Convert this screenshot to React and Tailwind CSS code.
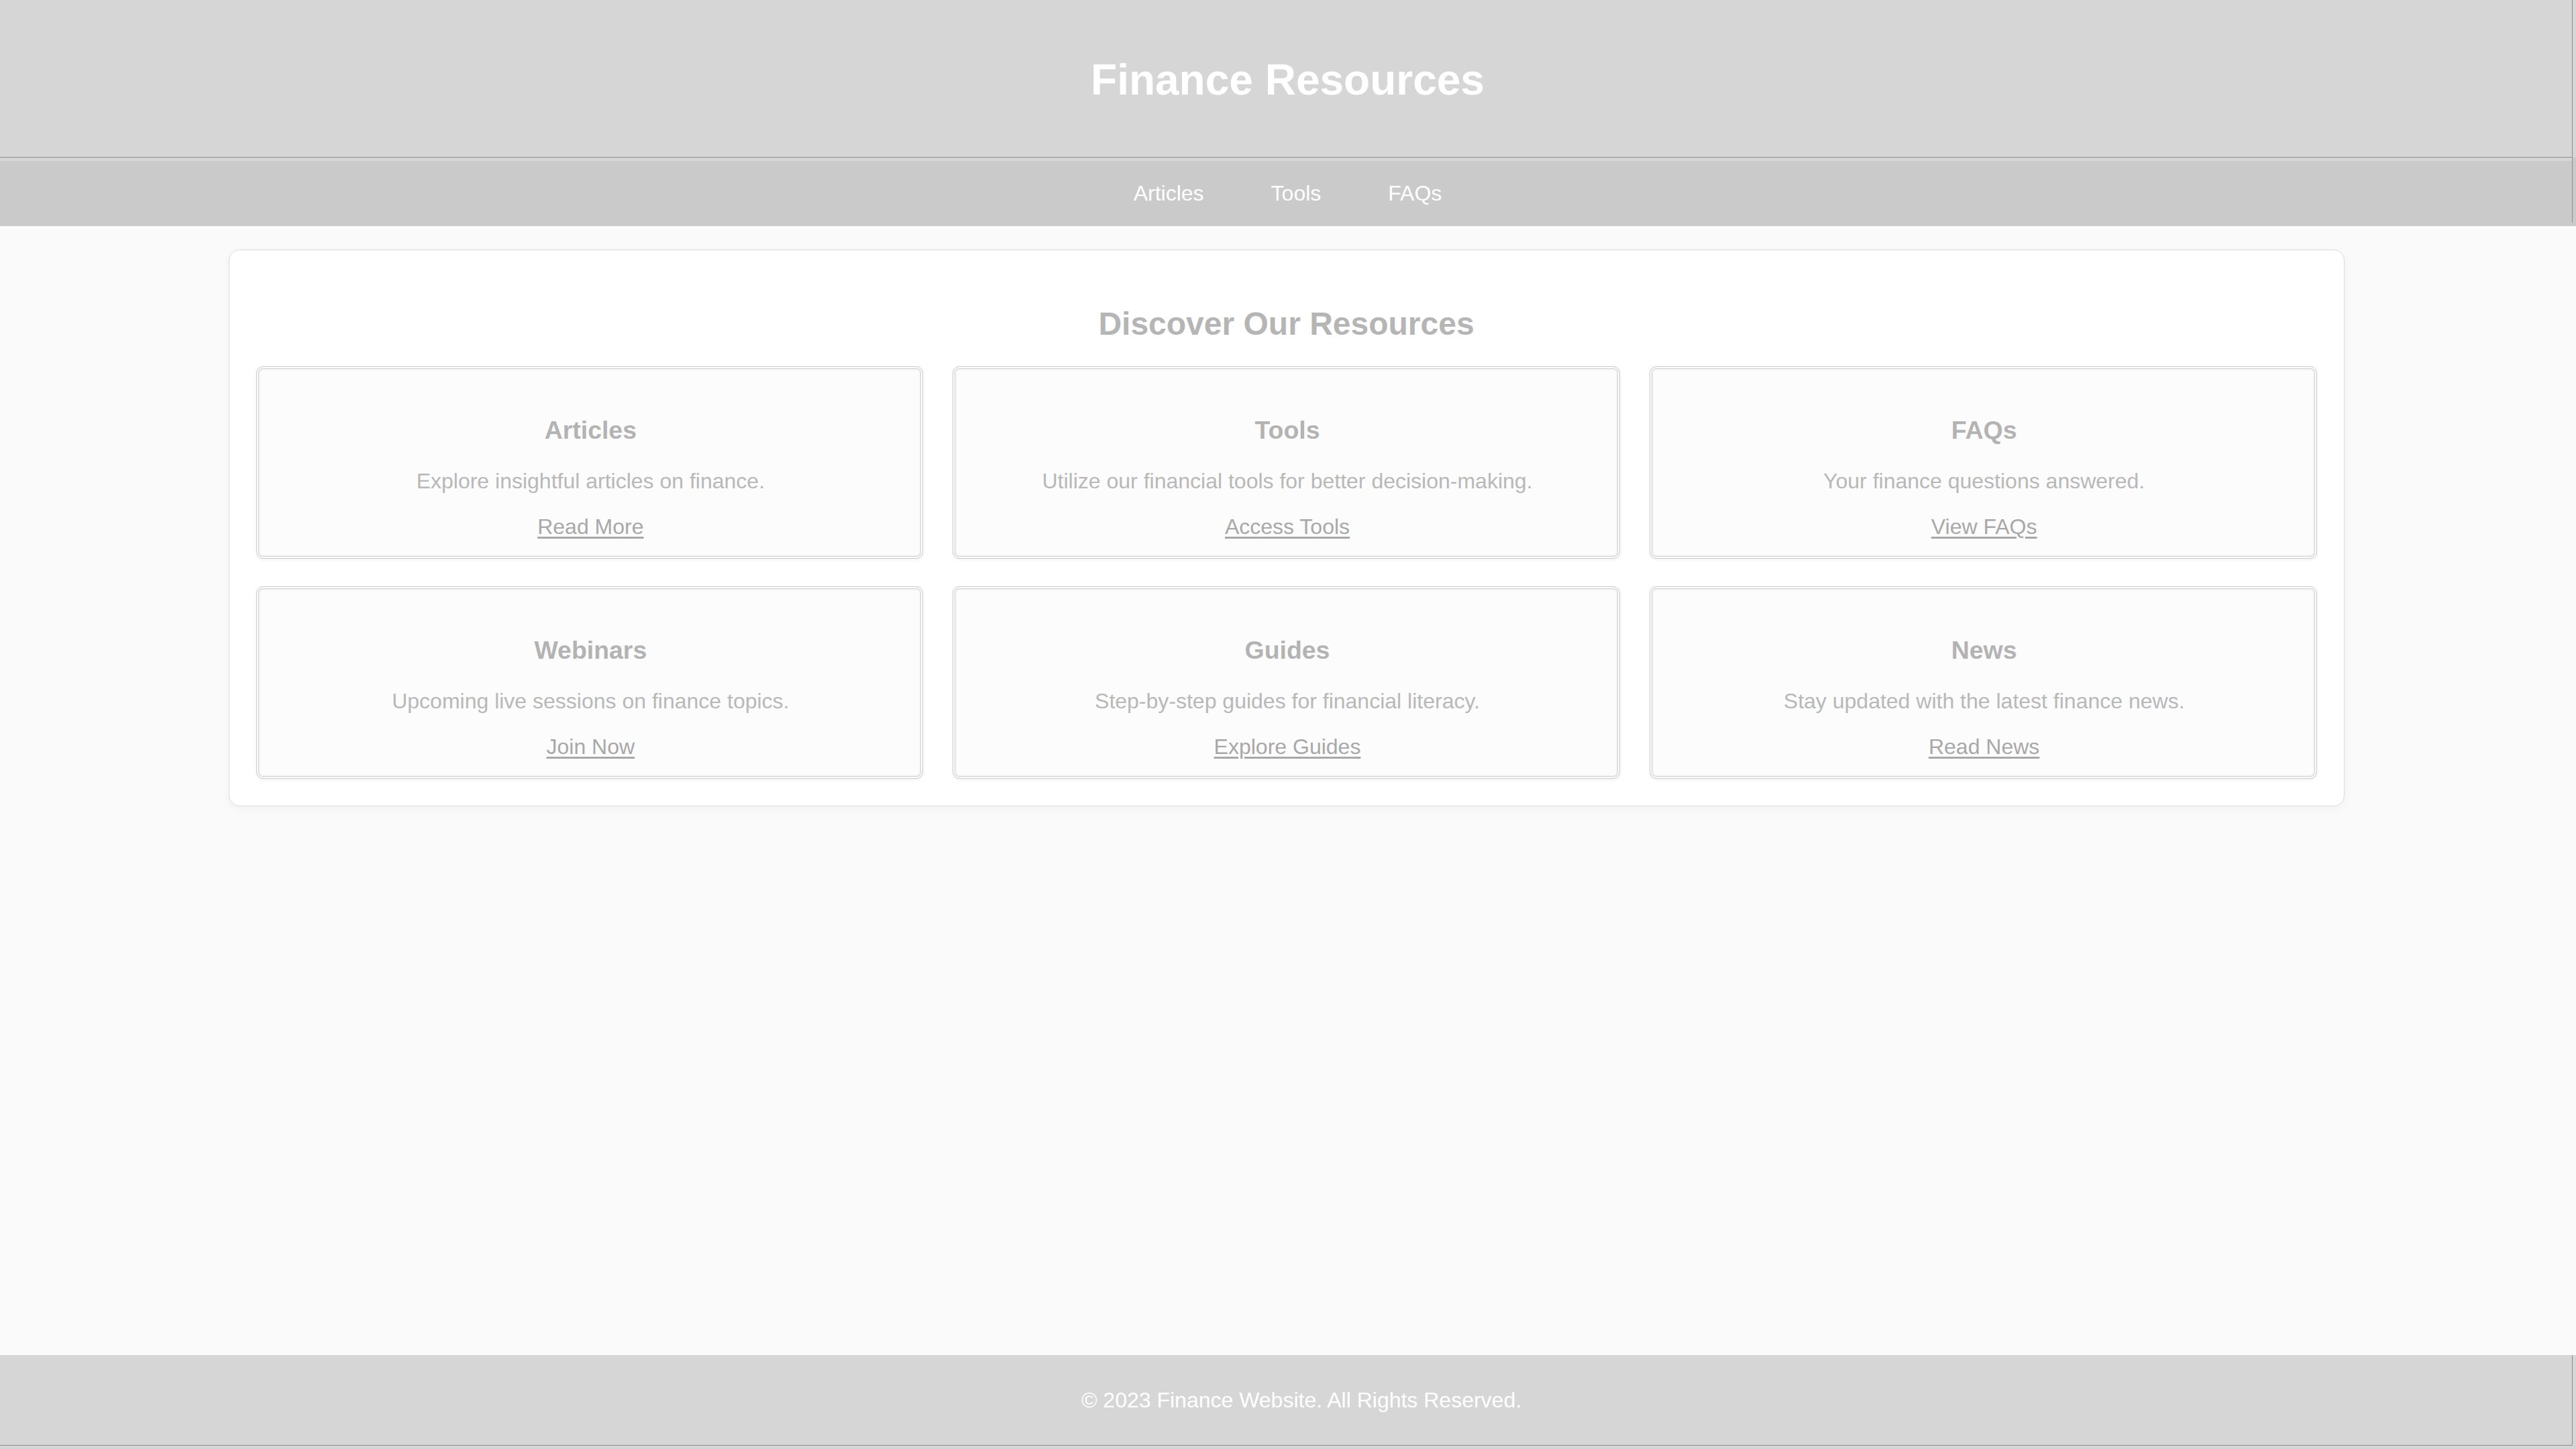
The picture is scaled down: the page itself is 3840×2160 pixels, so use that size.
import React from 'react';

const resources = [
  { title: 'Articles', text: 'Explore insightful articles on finance.', link: 'Read More' },
  { title: 'Tools', text: 'Utilize our financial tools for better decision-making.', link: 'Access Tools' },
  { title: 'FAQs', text: 'Your finance questions answered.', link: 'View FAQs' },
  { title: 'Webinars', text: 'Upcoming live sessions on finance topics.', link: 'Join Now' },
  { title: 'Guides', text: 'Step-by-step guides for financial literacy.', link: 'Explore Guides' },
  { title: 'News', text: 'Stay updated with the latest finance news.', link: 'Read News' },
];

function ResourceCard({ item }) {
  return (
    <div className="flex flex-col items-center h-[287px] pt-[73px] pl-[3px] bg-[#fcfcfc] border border-[#cccccc] rounded-[10px] shadow-[inset_0_0_0_2px_#fdfdfd,inset_0_0_0_3px_#d0d0d0,inset_0_0_0_5px_#f4f4f4,0_2px_5px_rgba(0,0,0,0.05)]">
      <h3 className="text-[37.44px] leading-[43px] font-bold text-[#b3b3b3]">{item.title}</h3>
      <p className="mt-[36px] text-[32px] leading-[37px] text-[#b8b8b8]">{item.text}</p>
      <a href="#" className="mt-[31px] text-[32px] leading-[37px] text-[#a8a8a8] underline underline-offset-[4px]">
        {item.link}
      </a>
    </div>
  );
}

export default function App() {
  return (
    <div className="min-h-[2160px] flex flex-col bg-[#fafafa] font-['Liberation_Sans',Arial,sans-serif]">
      {/* header */}
      <header className="bg-[#d6d6d6]">
        <div className="w-[3835px] h-[235px] pt-[4px] pl-[5px] flex items-center justify-center border-r border-b border-[#8c8c8c]">
          <h1 className="text-[64px] leading-[74px] font-bold text-white">Finance Resources</h1>
        </div>
      </header>

      {/* nav */}
      <nav className="bg-[#cacaca]">
        <div className="w-[3835px] border-r border-[#8c8c8c]">
          <div className="h-[5px] bg-[#d6d6d6]"></div>
          <div className="h-[92px] pt-[3px] pl-[5px] flex items-center justify-center gap-[100px] text-[32px] text-white">
            <a href="#">Articles</a>
            <a href="#">Tools</a>
            <a href="#">FAQs</a>
          </div>
        </div>
        <div className="h-[5px]"></div>
      </nav>

      {/* main */}
      <main className="flex-1 w-[3835px] pt-[35px]">
        <section className="mx-auto w-[3154px] bg-white border border-[#dcdcdc] rounded-[16px] p-[40px] shadow-[0_4px_14px_rgba(0,0,0,0.04)]">
          <h2 className="mt-[42px] mb-[36px] text-center text-[48px] leading-[55px] font-bold text-[#b5b5b5]">
            Discover Our Resources
          </h2>
          <div className="grid grid-cols-3 gap-x-[44px] gap-y-[41px]">
            {resources.map((item) => (
              <ResourceCard key={item.title} item={item} />
            ))}
          </div>
        </section>
      </main>

      {/* footer */}
      <footer className="bg-[#d6d6d6] h-[140px]">
        <div className="w-[3835px] h-[135px] pl-[46px] flex items-center justify-center border-r border-b border-[#8c8c8c]">
          <p className="text-[32px] leading-[37px] text-white">© 2023 Finance Website. All Rights Reserved.</p>
        </div>
      </footer>
    </div>
  );
}
